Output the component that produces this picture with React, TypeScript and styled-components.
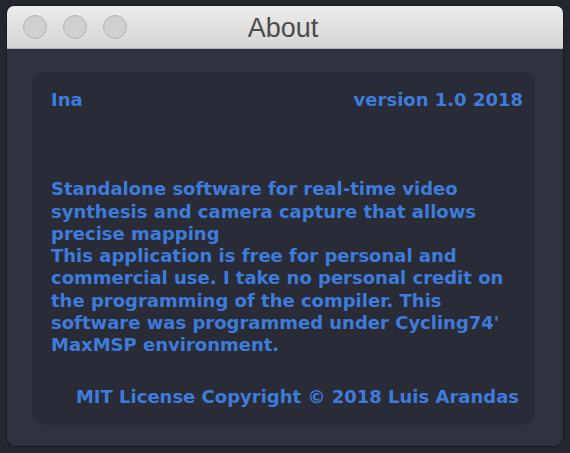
import styled, { createGlobalStyle } from "styled-components";

const GlobalStyle = createGlobalStyle`
  html, body {
    margin: 0;
    padding: 0;
    background: #24262e;
  }
  body {
    font-family: "DejaVu Sans", Verdana, sans-serif;
  }
`;

export default function App() {
  return (
    <>
      <GlobalStyle />
      <Page>
        <Window>
          <TitleBar>
            <Lights>
              <Light />
              <Light />
              <Light />
            </Lights>
            <Title>About</Title>
          </TitleBar>
          <WindowBody>
            <Panel>
              <HeaderRow>
                <BlueText>Ina</BlueText>
                <BlueText>version 1.0 2018</BlueText>
              </HeaderRow>
              <Description>
                <BlueText>
                  Standalone software for real-time video synthesis and camera capture that allows precise mapping
                </BlueText>
                <BlueText>
                  This application is free for personal and commercial use. I take no personal credit on the
                  programming of the compiler. This software was programmed under Cycling74' MaxMSP environment.
                </BlueText>
              </Description>
              <Footer>
                <BlueText>MIT License Copyright © 2018 Luis Arandas</BlueText>
              </Footer>
            </Panel>
          </WindowBody>
        </Window>
      </Page>
    </>
  );
}

const Page = styled.div`
  width: 570px;
  height: 453px;
  padding: 6px 7px 0 7px;
  box-sizing: border-box;
  overflow: hidden;
`;

const Window = styled.div`
  width: 556px;
  height: 440px;
  border-radius: 7px 7px 9px 9px;
  overflow: hidden;
  display: flex;
  flex-direction: column;
  background: #30333e;
  box-shadow: 0 0 0 1px rgba(0, 0, 0, 0.25);
`;

const TitleBar = styled.div`
  position: relative;
  height: 42px;
  flex: 0 0 42px;
  background: linear-gradient(#ececec, #d5d5d5);
  border-bottom: 1px solid #b1b1b1;
  display: flex;
  align-items: center;
  justify-content: center;
`;

const Lights = styled.div`
  position: absolute;
  left: 16px;
  top: 9px;
  display: flex;
  gap: 16px;
`;

const Light = styled.div`
  width: 22px;
  height: 22px;
  border-radius: 50%;
  background: #d0d0d0;
  border: 1px solid #b4b4b4;
`;

const Title = styled.div`
  font-family: "Liberation Sans", Arial, sans-serif;
  font-size: 27px;
  color: #4c4c4c;
  margin-left: -4px;
  margin-top: 2px;
`;

const WindowBody = styled.div`
  flex: 1;
  padding: 23px 28px 21px 25px;
  display: flex;
`;

const Panel = styled.div`
  flex: 1;
  background: #292b36;
  border-radius: 14px;
  padding: 17px 12px 17px 19px;
  display: flex;
  flex-direction: column;
`;

const HeaderRow = styled.div`
  display: flex;
  justify-content: space-between;
`;

const BlueText = styled.div`
  font-family: "DejaVu Sans", Verdana, sans-serif;
  font-weight: 700;
  font-size: 18px;
  line-height: 22.3px;
  color: #3d7cdc;
`;

const Description = styled.div`
  margin-top: 67px;
  padding-right: 4px;
`;

const Footer = styled.div`
  margin-top: auto;
  display: flex;
  justify-content: flex-end;
  padding-right: 4px;
`;
